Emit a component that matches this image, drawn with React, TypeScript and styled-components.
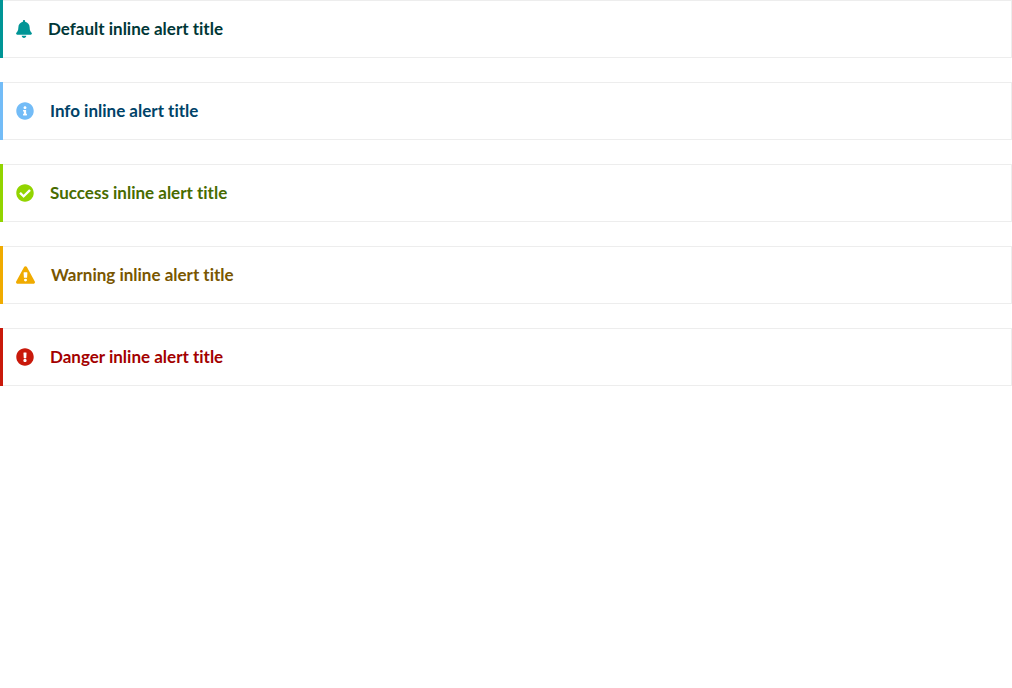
import React from "react";
import styled, { createGlobalStyle } from "styled-components";
import { FaBell, FaInfoCircle, FaCheckCircle, FaExclamationCircle } from "react-icons/fa";

const GlobalStyle = createGlobalStyle`
  * { box-sizing: border-box; }
  body {
    margin: 0;
    background: #ffffff;
    font-family: Lato, sans-serif;
  }
`;

const AlertList = styled.main`
  display: flex;
  flex-direction: column;
  gap: 24px;
`;

const Alert = styled.section<{ $accent: string }>`
  border-left: 3px solid ${(p) => p.$accent};
`;

const AlertBody = styled.div`
  display: flex;
  align-items: center;
  gap: 16px;
  padding: 16px 16px 16px 13px;
  border: 1px solid #ededed;
  border-left: 0;
  background: #ffffff;
`;

const AlertIcon = styled.span<{ $color: string; $width: number }>`
  display: flex;
  color: ${(p) => p.$color};

  svg {
    width: ${(p) => p.$width}px;
    height: 18px;
  }
`;

const AlertTitle = styled.h4<{ $color: string }>`
  margin: 0;
  font-size: 17px;
  font-weight: 700;
  line-height: 24px;
  font-variant-ligatures: none;
  color: ${(p) => p.$color};
`;

const WarningTriangle = () => (
  <svg viewBox="0 0 19 18" fill="currentColor" aria-hidden>
    <path
      fillRule="evenodd"
      d="M8.1 1.1c.6-1.1 2.200-1.100 2.800 0l7.900 14.300c.6 1.100-.2 2.400-1.400 2.400H1.600c-1.200 0-2-1.300-1.400-2.400zM7.600 6.700l.3 4.700c0 .3.200.4.400.4h2.400c.2 0 .4-.1.4-.4l.3-4.700c0-.3-.2-.5-.4-.5H8c-.2 0-.4.2-.4.5zM9.500 12.700a1.500 1.400 0 1 0 0 2.800a1.500 1.400 0 1 0 0-2.800z"
    />
  </svg>
);

interface Variant {
  label: string;
  accent: string;
  text: string;
  Icon: React.ComponentType;
  width: number;
}

const variants: Variant[] = [
  { label: "Default", accent: "#009596", text: "#003737", Icon: FaBell, width: 16 },
  { label: "Info", accent: "#73bcf7", text: "#004368", Icon: FaInfoCircle, width: 18 },
  { label: "Success", accent: "#92d400", text: "#486b00", Icon: FaCheckCircle, width: 18 },
  { label: "Warning", accent: "#f0ab00", text: "#795600", Icon: WarningTriangle, width: 19 },
  { label: "Danger", accent: "#c9190b", text: "#a30000", Icon: FaExclamationCircle, width: 18 },
];

export default function App() {
  return (
    <>
      <GlobalStyle />
      <AlertList>
        {variants.map(({ label, accent, text, Icon, width }) => (
          <Alert key={label} $accent={accent} aria-label={`${label} alert`}>
            <AlertBody>
              <AlertIcon $color={accent} $width={width} aria-hidden>
                <Icon />
              </AlertIcon>
              <AlertTitle $color={text}>{label} inline alert title</AlertTitle>
            </AlertBody>
          </Alert>
        ))}
      </AlertList>
    </>
  );
}
